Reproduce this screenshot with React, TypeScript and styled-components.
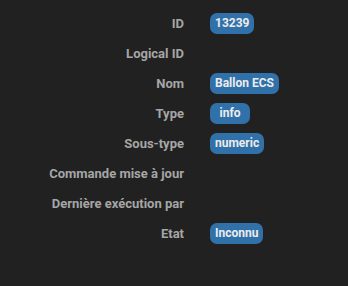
import React from "react";
import styled, { createGlobalStyle } from "styled-components";

const Global = createGlobalStyle`
  html, body { margin: 0; padding: 0; background: #212121; }
  body { font-family: Roboto, "Noto Sans", sans-serif; }
`;

const Panel = styled.div`
  width: 348px;
  height: 286px;
  background: #212121;
  padding-top: 8px;
  box-sizing: border-box;
  display: grid;
  grid-template-columns: 184px 1fr;
  grid-auto-rows: 30px;
  column-gap: 26px;
  align-items: center;
  align-content: start;
`;

const Label = styled.div`
  text-align: right;
  color: #a6a6a6;
  font-size: 13px;
  font-weight: 700;
`;

const Value = styled.div`
  display: flex;
  align-items: center;
`;

const Badge = styled.span`
  display: inline-block;
  box-sizing: border-box;
  min-width: 40px;
  text-align: center;
  background: #3171aa;
  color: #ececec;
  font-size: 12px;
  font-weight: 700;
  line-height: 21px;
  padding: 0 5px;
  border-radius: 7px;
`;

const rows: [string, string | null][] = [
  ["ID", "13239"],
  ["Logical ID", null],
  ["Nom", "Ballon ECS"],
  ["Type", "info"],
  ["Sous-type", "numeric"],
  ["Commande mise à jour", null],
  ["Dernière exécution par", null],
  ["Etat", "Inconnu"],
];

export default function App() {
  return (
    <>
      <Global />
      <Panel>
        {rows.map(([l, v]) => (
          <React.Fragment key={l}>
            <Label>{l}</Label>
            <Value>{v ? <Badge>{v}</Badge> : null}</Value>
          </React.Fragment>
        ))}
      </Panel>
    </>
  );
}
